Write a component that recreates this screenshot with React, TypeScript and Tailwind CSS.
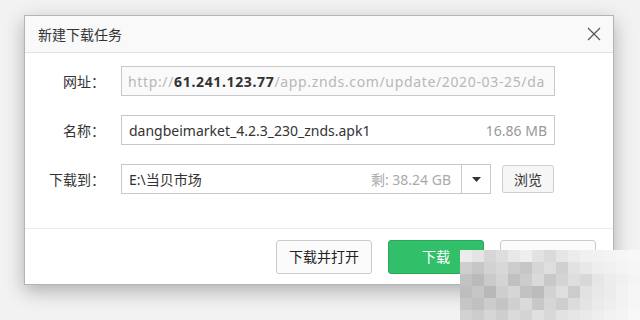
import React from "react";

const font = { fontFamily: '"Noto Sans", "Noto Sans CJK SC", sans-serif' };

// mosaic watermark in the lower right corner
const mosaic = [
  [236, 228, 214, 222, 232, 238, 226, 218, 230, 236, 240, 242, 244, 246, 248],
  [206, 198, 210, 216, 204, 198, 214, 222, 208, 226, 232, 238, 240, 244, 246],
  [194, 186, 202, 212, 192, 204, 218, 200, 212, 222, 216, 230, 236, 240, 244],
  [190, 198, 184, 206, 214, 194, 188, 210, 222, 204, 226, 232, 236, 242, 246],
  [198, 192, 204, 196, 208, 218, 200, 214, 206, 220, 228, 234, 238, 242, 246],
  [210, 204, 214, 206, 218, 212, 224, 216, 226, 230, 234, 238, 242, 244, 248],
];

function Row({ label, children }: { label: string; children: React.ReactNode }) {
  return (
    <div className="flex items-center h-[30px]">
      <div className="w-[81px] text-right text-[14px] text-[#333] pr-[1px]">{label}</div>
      <div className="ml-[15px] flex items-center">{children}</div>
    </div>
  );
}

export default function App() {
  return (
    <div className="relative w-[640px] h-[320px] bg-[#f2f2f2] overflow-hidden pt-[15px] pl-[24px]" style={font}>
      <div className="w-[590px] h-[270px] bg-white border border-[#b4b4b4] shadow-[0_6px_18px_rgba(0,0,0,0.28)] flex flex-col">
        {/* title bar */}
        <div className="h-[37px] shrink-0 bg-[#f9f9f9] border-b border-[#e3e3e3] flex items-center justify-between pl-[13px] pr-[12px]">
          <span className="text-[14px] text-[#333]">新建下载任务</span>
          <svg width="14" height="14" viewBox="0 0 14 14" className="text-[#555]">
            <path d="M1 1 L13 13 M13 1 L1 13" stroke="currentColor" strokeWidth="1.2" fill="none" />
          </svg>
        </div>

        {/* form */}
        <div className="flex-1 flex flex-col gap-[19px] pt-[13px] border-b border-[#ececec]">
          <Row label="网址：">
            <div className="w-[434px] h-[30px] border border-[#c8c8c8] bg-[#fafafa] px-[6px] flex items-center overflow-hidden whitespace-nowrap text-[14px] tracking-[0.65px] text-[#b8b8b8]">
              http://<span className="font-bold text-[#333]">61.241.123.77</span>/app.znds.com/update/2020-03-25/da
            </div>
          </Row>
          <Row label="名称：">
            <div className="w-[434px] h-[30px] border border-[#c8c8c8] bg-white px-[7px] flex items-center justify-between text-[14px]">
              <span className="text-[#333]">dangbeimarket_4.2.3_230_znds.apk1</span>
              <span className="text-[#999]">16.86 MB</span>
            </div>
          </Row>
          <Row label="下载到：">
            <div className="w-[370px] h-[30px] border border-[#c8c8c8] bg-white flex items-stretch text-[14px]">
              <div className="flex-1 flex items-center justify-between pl-[7px] pr-[10px]">
                <span className="text-[#333]">E:\当贝市场</span>
                <span className="text-[#aaa]">剩: 38.24 GB</span>
              </div>
              <div className="w-[29px] border-l border-[#c8c8c8] flex items-center justify-center">
                <svg width="9" height="5" viewBox="0 0 9 5">
                  <path d="M0 0 H9 L4.5 5 Z" fill="#333" />
                </svg>
              </div>
            </div>
            <button className="ml-[11px] w-[52px] h-[28px] border border-[#cfcfcf] bg-[#f6f6f6] rounded-[2px] text-[14px] text-[#333]">
              浏览
            </button>
          </Row>
        </div>

        {/* footer */}
        <div className="h-[55px] shrink-0 flex items-center justify-end gap-[16px] pr-[17px]">
          <button className="w-[96px] h-[34px] border border-[#cccccc] bg-[#fbfbfb] rounded-[3px] text-[14px] text-[#222]">
            下载并打开
          </button>
          <button className="w-[96px] h-[34px] border border-[#2aa85c] bg-[#32bf69] rounded-[3px] text-[14px] text-white">
            下载
          </button>
          <button className="w-[96px] h-[34px] border border-[#cccccc] bg-[#fbfbfb] rounded-[3px] text-[14px] text-[#222]">
            取消
          </button>
        </div>
      </div>

      <div className="absolute left-[460px] top-[250px] grid grid-cols-[repeat(15,12px)] grid-rows-[repeat(6,12px)]">
        {mosaic.flat().map((g, i) => (
          <div key={i} style={{ background: `rgb(${g},${g},${g})` }} />
        ))}
      </div>
    </div>
  );
}
